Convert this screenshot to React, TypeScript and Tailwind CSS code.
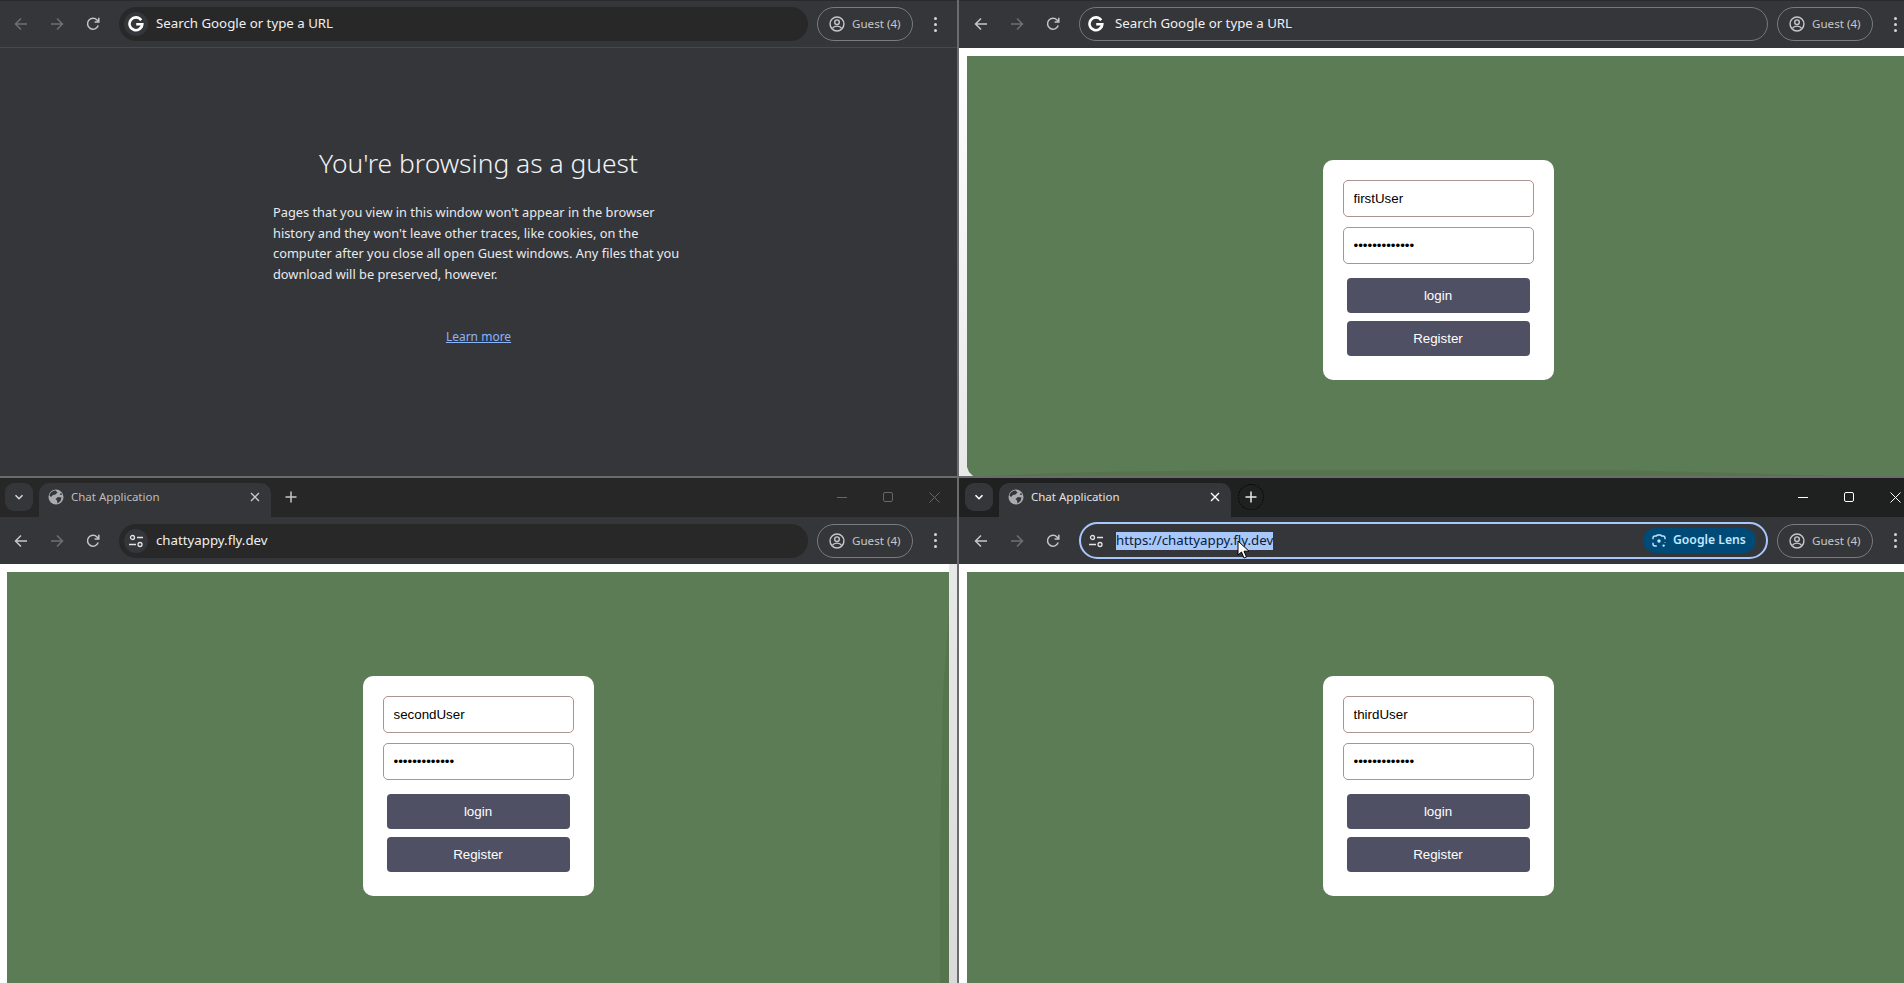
import React from "react";

const ui = { fontFamily: '"Noto Sans", "Open Sans", sans-serif' };
const arial = { fontFamily: '"Liberation Sans", Arial, sans-serif' };

function Back({ className }: { className: string }) {
  return (
    <svg width="16" height="16" viewBox="0 0 16 16" fill="none" stroke="currentColor" strokeWidth="1.5" className={className}>
      <path d="M14 8H2.5M8 2.5 2.5 8 8 13.5" />
    </svg>
  );
}
function Forward({ className }: { className: string }) {
  return (
    <svg width="16" height="16" viewBox="0 0 16 16" fill="none" stroke="currentColor" strokeWidth="1.5" className={className}>
      <path d="M2 8h11.5M8 2.5 13.5 8 8 13.5" />
    </svg>
  );
}
function Reload() {
  return (
    <svg width="16" height="16" viewBox="0 0 16 16" fill="none" stroke="currentColor" strokeWidth="1.5" className="text-[#c4c7c5]">
      <path d="M13.2 9.6A5.5 5.5 0 1 1 12 3.9L13.6 5.6" />
      <path d="M13.8 1.8v4.2H9.6" fill="none" />
    </svg>
  );
}
function GLogo() {
  return (
    <svg width="16" height="16" viewBox="0 0 16 16" fill="none" stroke="#ffffff" strokeWidth="2.6">
      <path d="M13.2 4.2A6.4 6.4 0 1 0 14.3 8.2H8.2" />
    </svg>
  );
}
function Tune() {
  return (
    <svg width="16" height="16" viewBox="0 0 16 16" fill="none" stroke="#e3e3e3" strokeWidth="1.3">
      <circle cx="4.5" cy="4.5" r="2" />
      <path d="M9 4.5h6M1 11.5h7" />
      <circle cx="12" cy="11.5" r="2" />
    </svg>
  );
}
function Person() {
  return (
    <svg width="16" height="16" viewBox="0 0 18 18" fill="none" stroke="#c7c7c7" strokeWidth="1.6">
      <circle cx="9" cy="9" r="7.8" />
      <circle cx="9" cy="7" r="2.6" />
      <path d="M3.8 14c1-1.7 3-2.6 5.2-2.6s4.2.9 5.2 2.6" />
    </svg>
  );
}
function Globe() {
  return (
    <svg width="16" height="16" viewBox="0 0 16 16">
      <circle cx="8" cy="8" r="7.5" fill="#a8abb0" />
      <path d="M7.5 1.5 9.5 3.5 7.5 5.5 5 6 3 8 1.5 6.5C2 4 4.5 1.5 7.5 1.5ZM10 8l3.5.5-1 3.5-3 2.5-.5-3-1.5-1.5ZM13 3.5l1 2.5-2 0Z" fill="#35363a" />
    </svg>
  );
}
function LensIcon() {
  return (
    <svg width="14" height="14" viewBox="0 0 14 14" fill="none" stroke="#c2e7ff" strokeWidth="1.4">
      <path d="M1 5.2V4a2 2 0 0 1 2-2h1.4l.9-1h3.4l.9 1H11a2 2 0 0 1 2 2v1.2M1 8.8V10a2 2 0 0 0 2 2h1.8M13 8.2v.6" />
      <circle cx="7" cy="7" r="1.7" fill="#c2e7ff" stroke="none" />
      <circle cx="11.6" cy="11.6" r="1.2" fill="#c2e7ff" stroke="none" />
    </svg>
  );
}

function GuestPill() {
  return (
    <div style={ui} className="flex h-[34px] w-[96px] shrink-0 items-center gap-[7px] rounded-full border border-[#7a7b7d] pl-[11px] text-[11.6px] text-[#c7c7c7]">
      <Person />
      <span>Guest (4)</span>
    </div>
  );
}

function Dots() {
  return (
    <div className="flex w-[22px] shrink-0 flex-col items-center gap-[3px]">
      <span className="h-[3px] w-[3px] rounded-full bg-[#d5d5d5]" />
      <span className="h-[3px] w-[3px] rounded-full bg-[#d5d5d5]" />
      <span className="h-[3px] w-[3px] rounded-full bg-[#d5d5d5]" />
    </div>
  );
}

function Toolbar({
  omnibox,
  backClass = "text-[#c4c7c5]",
  frame = "h-[47px]",
  right = false,
}: {
  omnibox: React.ReactNode;
  backClass?: string;
  frame?: string;
  right?: boolean;
}) {
  return (
    <div className={`flex shrink-0 items-center bg-[#35363a] ${frame}`}>
      <div className={`flex shrink-0 items-center gap-[20px] ${right ? "w-[120px] pl-[14px]" : "w-[119px] pl-[13px]"}`}>
        <Back className={backClass} />
        <Forward className="text-[#6f7072]" />
        <Reload />
      </div>
      {omnibox}
      <div className="ml-[9px] flex w-[127px] shrink-0 items-center">
        <GuestPill />
        <div className="ml-[11px]">
          <Dots />
        </div>
      </div>
    </div>
  );
}

function PlainOmnibox({
  icon,
  text,
  outlined = false,
}: {
  icon: React.ReactNode;
  text: string;
  outlined?: boolean;
}) {
  return (
    <div
      style={ui}
      className={`flex h-[34px] w-[689px] shrink-0 items-center rounded-full text-[13.27px] text-[#f0f0f0] ${
        outlined ? "border border-[#77787a] bg-[#35363a] pl-[4px]" : "bg-[#282828] pl-[5px]"
      }`}
    >
      <div className={`flex h-[24px] w-[24px] items-center justify-center rounded-full ${outlined ? "" : "bg-[#35363a]"}`}>{icon}</div>
      <span className={outlined ? "ml-[7px]" : "ml-[8px]"}>{text}</span>
    </div>
  );
}

function FocusedOmnibox() {
  return (
    <div style={ui} className="flex h-[37px] w-[689px] shrink-0 items-center rounded-full border-2 border-[#a8c7fa] bg-[#35363a] pl-[3px] pr-[10px] text-[13.27px]">
      <div className="flex h-[24px] w-[24px] items-center justify-center">
        <Tune />
      </div>
      <span className="ml-[8px] flex h-[18px] items-center bg-[#a8c7fa] text-[#0b1a33]">https://chattyappy.fly.dev</span>
      <div className="ml-auto flex h-[25px] w-[113px] items-center gap-[7px] rounded-full bg-[#004a77] pl-[9px] text-[12.2px] font-semibold text-[#c2e7ff]">
        <LensIcon />
        <span>Google Lens</span>
      </div>
    </div>
  );
}

function TabStrip({ active }: { active: boolean }) {
  const text = active ? "text-[#e3e3e3]" : "text-[#bdbdbd]";
  const control = active ? "#ffffff" : "#66676a";
  return (
    <div className={`flex h-[39px] shrink-0 items-start pt-[5px] ${active ? "w-[962px] bg-[#1f2020] pl-[6px]" : "w-[960px] bg-[#272727] pl-[5px]"}`}>
      <div className="flex h-[28px] w-[28px] shrink-0 items-center justify-center rounded-[9px] bg-[#35363a]">
        <svg width="10" height="10" viewBox="0 0 10 10" fill="none" stroke={active ? "#ffffff" : "#d5d5d5"} strokeWidth="1.6">
          <path d="M1.5 3.2 5 6.7l3.5-3.5" />
        </svg>
      </div>
      <div style={ui} className={`ml-[6px] flex h-[34px] w-[232px] shrink-0 items-center rounded-t-[10px] bg-[#35363a] pb-[6px] pl-[9px] text-[11.5px] ${text}`}>
        <Globe />
        <span className="ml-[7px]">Chat Application</span>
        <svg width="10" height="10" viewBox="0 0 10 10" fill="none" stroke={active ? "#ffffff" : "#c7c7c7"} strokeWidth="1.4" className="ml-auto mr-[11px]">
          <path d="M1 1l8 8M9 1 1 9" />
        </svg>
      </div>
      <div className="relative ml-[7px] mt-[1px] flex h-[26px] w-[26px] shrink-0 items-center justify-center">
        {active && <span className="absolute inset-0 rounded-full border border-dotted border-black" />}
        <svg width="12" height="12" viewBox="0 0 12 12" fill="none" stroke={active ? "#e8e8e8" : "#c7c7c7"} strokeWidth="1.5">
          <path d="M6 .5v11M.5 6h11" />
        </svg>
      </div>
      <div className="ml-auto flex h-[28px] w-[142px] shrink-0 items-center">
        <div className="flex w-[47px] justify-center">
          <svg width="10" height="10" viewBox="0 0 10 10" stroke={control} strokeWidth="1"><path d="M0 5.5h10" /></svg>
        </div>
        <div className="flex w-[46px] justify-center">
          <svg width="10" height="10" viewBox="0 0 10 10" fill="none" stroke={control} strokeWidth="1"><rect x=".5" y=".5" width="9" height="9" rx="1.5" /></svg>
        </div>
        <div className="flex w-[47px] justify-center">
          <svg width="11" height="11" viewBox="0 0 11 11" fill="none" stroke={control} strokeWidth="1"><path d="M.5.5l10 10M10.5.5l-10 10" /></svg>
        </div>
      </div>
    </div>
  );
}

function Field({ value, password = false }: { value: string; password?: boolean }) {
  return (
    <input
      readOnly
      type={password ? "password" : "text"}
      value={value}
      style={arial}
      className="h-[37px] w-[191px] rounded-[5px] border border-[#ab9393] bg-white px-[10px] text-[13.33px] text-black outline-none"
    />
  );
}

function Action({ label }: { label: string }) {
  return (
    <button style={arial} className="h-[35px] w-[183px] rounded-[4px] bg-[#505064] text-[13.33px] text-white">
      {label}
    </button>
  );
}

function LoginPage({ user }: { user: string }) {
  return (
    <div className="flex h-[600px] w-[942px] shrink-0 justify-center bg-[#5c7c55] pt-[104px]">
      <div className="flex h-[220px] w-[231px] flex-col items-center rounded-[10px] bg-white pt-[20px]">
        <Field value={user} />
        <div className="mt-[10px]">
          <Field value="password12345" password />
        </div>
        <div className="mt-[14px]">
          <Action label="login" />
        </div>
        <div className="mt-[8px]">
          <Action label="Register" />
        </div>
      </div>
    </div>
  );
}

function PageFrame({ user, left, right }: { user: string; left: string; right?: string }) {
  return (
    <div className="flex min-h-0 flex-1 overflow-hidden bg-white">
      <div className={`shrink-0 self-stretch ${left}`} />
      <div className="shrink-0 pt-[8px]">
        <LoginPage user={user} />
      </div>
      {right && <div className={`flex-1 self-stretch ${right}`} />}
    </div>
  );
}

function GuestPage() {
  return (
    <div style={ui} className="min-h-0 flex-1 bg-[#35363a] pt-[98px] text-[#e8eaed]">
      <h1 className="text-center text-[26.4px] leading-[34px] font-light text-[#f1f3f4]">You're browsing as a guest</h1>
      <p className="ml-[273px] mt-[22px] w-[420px] text-[12.8px] leading-[20.5px]">
        Pages that you view in this window won't appear in the browser history and they won't leave other traces, like cookies, on the computer after you close all open Guest windows. Any files that you download will be preserved, however.
      </p>
      <div className="mt-[44px] text-center text-[12px] text-[#8ab4f8] underline">Learn more</div>
    </div>
  );
}

export default function App() {
  return (
    <div className="relative grid h-[983px] w-[1904px] grid-cols-[957px_945px] grid-rows-[476px_505px] gap-[2px] overflow-hidden bg-[#6b6b6d]">
      <section className="flex min-w-0 flex-col overflow-hidden">
        <Toolbar
          frame="h-[48px] border-t border-b border-t-[#2a2a2c] border-b-[#48494d]"
          backClass="text-[#6f7072]"
          omnibox={<PlainOmnibox icon={<GLogo />} text="Search Google or type a URL" />}
        />
        <GuestPage />
      </section>
      <section className="flex min-w-0 flex-col overflow-hidden">
        <Toolbar
          right
          frame="h-[48px] border-t border-b border-t-[#2a2a2c] border-b-[#35363a]"
          omnibox={<PlainOmnibox outlined icon={<GLogo />} text="Search Google or type a URL" />}
        />
        <PageFrame user="firstUser" left="w-[8px] bg-gradient-to-b from-white to-[#e8e8e8]" />
      </section>
      <section className="flex min-w-0 flex-col overflow-hidden">
        <TabStrip active={false} />
        <Toolbar omnibox={<PlainOmnibox icon={<Tune />} text="chattyappy.fly.dev" />} />
        <PageFrame user="secondUser" left="w-[7px]" right="bg-gradient-to-b from-[#e8e8e8] to-[#dadada]" />
      </section>
      <section className="flex min-w-0 flex-col overflow-hidden">
        <TabStrip active />
        <Toolbar right omnibox={<FocusedOmnibox />} />
        <PageFrame user="thirdUser" left="w-[8px]" />
      </section>
      <svg width="1904" height="983" viewBox="0 0 1904 983" className="pointer-events-none absolute left-0 top-0">
        <polygon points="949,610 943,693 941,793 940,850 940,983 949,983" fill="#56754f" />
        <polygon points="985,476 1060,473 1115,471.5 1280,470 1615,470 1700,472 1810,475 1850,476" fill="#56754f" />
        <polygon points="967,467 969,472 973,476 967,476" fill="#e8e8e8" />
      </svg>
      <svg width="13" height="19" viewBox="0 0 13 19" className="absolute left-[1237px] top-[540px]">
        <path d="M1 1v14l3.5-3 2.5 6 2.5-1-2.5-5.8H12Z" fill="#ffffff" stroke="#000000" strokeWidth="1" />
      </svg>
    </div>
  );
}
